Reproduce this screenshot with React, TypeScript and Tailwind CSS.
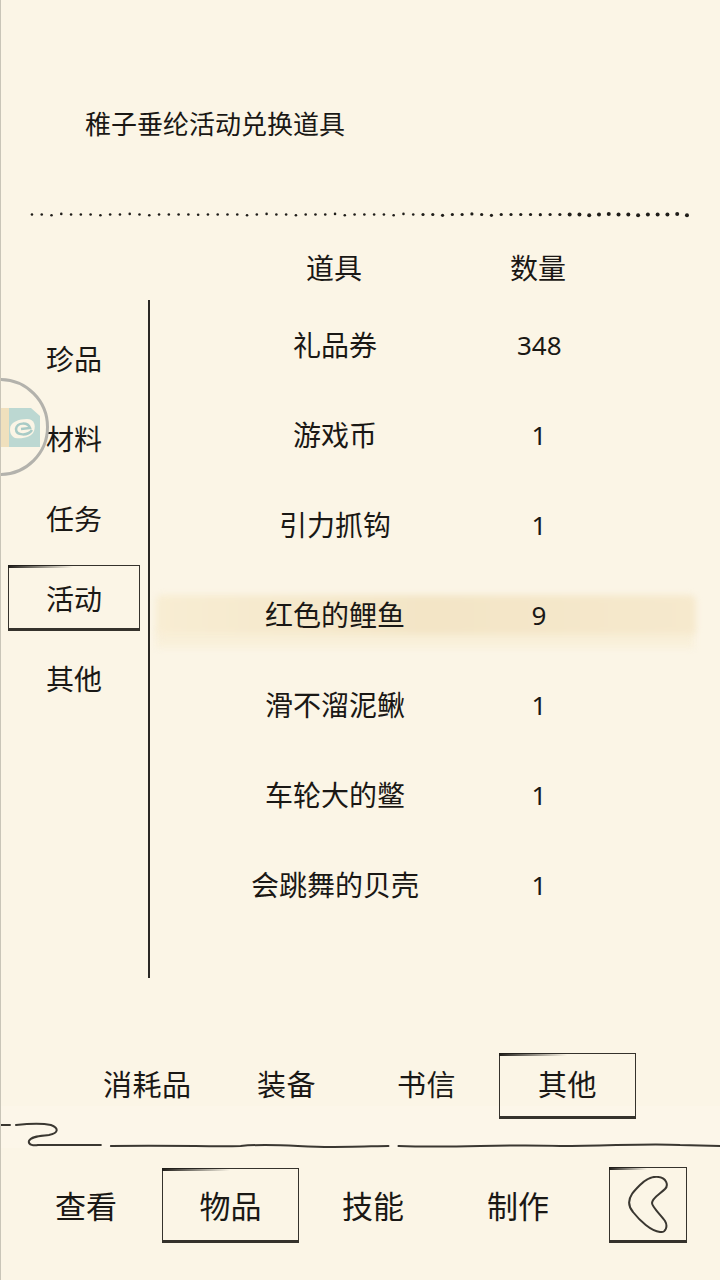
const dots = Array.from({ length: 68 }, (_, i) => ({
  x: 31 + i * 9.79,
  y: 214.5 + (i % 5 === 2 ? 0.8 : 0) - (i % 7 === 3 ? 0.6 : 0),
  r: i < 40 ? 1.3 : i < 55 ? 1.6 : 2,
}));

const items = [
  { name: "礼品券", count: "348" },
  { name: "游戏币", count: "1" },
  { name: "引力抓钩", count: "1" },
  { name: "红色的鲤鱼", count: "9", active: true },
  { name: "滑不溜泥鳅", count: "1" },
  { name: "车轮大的鳖", count: "1" },
  { name: "会跳舞的贝壳", count: "1" },
];

const categories = ["珍品", "材料", "任务", "活动", "其他"];

// hand drawn looking frame around the selected tab
const SketchBox = ({ className, children }: { className: string; children: React.ReactNode }) => (
  <div className={`relative flex items-center justify-center border-[1.5px] border-b-[3px] border-[#35322c] pt-[2px] ${className}`}>
    <span className="absolute -left-px -top-px h-[3px] w-1/2 bg-linear-to-r from-[#1f1d19] to-transparent" />
    {children}
  </div>
);

export default function App() {
  return (
    <div
      className="relative flex h-[1280px] w-[720px] flex-col overflow-hidden border-l border-[#c9c5b8] bg-[#fbf5e6] text-[#1a1815]"
      style={{ fontFamily: '"Noto Sans CJK SC", "Noto Sans", sans-serif' }}
    >
      {/* title */}
      <div className="flex h-[206px] items-start pl-[84px] pt-[104px] text-[26px] leading-[38px]">稚子垂纶活动兑换道具</div>

      {/* dotted rule */}
      <svg className="h-[16px] w-full shrink-0" viewBox="0 206 720 16">
        {dots.map((d, i) => (
          <circle key={i} cx={d.x} cy={d.y} r={d.r} fill="#1f1d19" />
        ))}
      </svg>

      {/* column heads */}
      <div className="flex h-[78px] shrink-0 items-center pl-[150px] pt-[12px] text-[28px]">
        <div className="w-[366px] text-center">道具</div>
        <div className="-ml-[7px] w-[56px] whitespace-nowrap text-center">数量</div>
      </div>

      {/* list area */}
      <div className="flex h-[678px] shrink-0">
        <div className="flex w-[149px] shrink-0 flex-col items-center border-r-2 border-[#2a2824] pr-[1px] pt-[18px]">
          {categories.map((c) => (
            <div key={c} className="flex h-[80px] w-[132px] shrink-0 items-center justify-center text-[28px]">
              {c === "活动" ? <SketchBox className="h-[66px] w-[132px]">{c}</SketchBox> : c}
            </div>
          ))}
        </div>

        <div className="ml-[2px] flex-1">
          {items.map((item) => (
            <div key={item.name} className="relative flex h-[90px] items-center">
              {item.active && (
                <>
                  <div className="absolute left-[4px] right-[26px] top-[60px] h-[18px] bg-[#f9f0da] blur-[3px]" />
                  <div className="absolute left-[4px] right-[24px] top-[25px] h-[40px] rounded-[6px] bg-linear-to-r from-[#f8edd3] via-[#f3e5c6] to-[#f6e9cd] blur-[3px]" />
                </>
              )}
              <div className="relative w-[366px] -translate-y-px text-center text-[28px]">{item.name}</div>
              <div className="relative -ml-[1px] w-[44px] text-center text-[26px]" style={{ fontFamily: '"Noto Sans", sans-serif' }}>
                {item.count}
              </div>
            </div>
          ))}
        </div>
      </div>

      {/* sub tabs */}
      <div className="mt-[74px] flex h-[66px] shrink-0 items-center text-[29px]">
        <div className="ml-[102px] w-[90px] -translate-y-px whitespace-nowrap tracking-[0.5px]">消耗品</div>
        <div className="ml-[64px] w-[60px] -translate-y-px whitespace-nowrap tracking-[0.5px]">装备</div>
        <div className="ml-[80px] w-[60px] -translate-y-px whitespace-nowrap tracking-[0.5px]">书信</div>
        <SketchBox className="ml-[42px] h-[66px] w-[137px] translate-y-px">
          <span className="-translate-y-[2px] tracking-[0.5px]">其他</span>
        </SketchBox>
      </div>

      {/* wave rule */}
      <svg className="-mt-[12px] h-[42px] w-full shrink-0 bg-[#fcf6e9]" viewBox="0 1106 720 42" fill="none" stroke="#3a3731" strokeLinecap="round">
        <path d="M0 1125 H9 M15 1125 C25 1124 40 1123 50 1125 C58 1128 58 1133 48 1135 C40 1136 30 1136 28 1141 C27 1145 33 1146 37 1145 H100" strokeWidth="2" />
        <path d="M110 1146 C180 1145 210 1147 240 1146 C270 1143 300 1147 330 1147 C350 1147 380 1146 388 1146 M398 1146 C460 1148 500 1144 560 1146 C610 1146 650 1143 680 1145 L720 1146" strokeWidth="2" />
      </svg>

      {/* bottom nav */}
      <div className="mt-[19px] flex h-[76px] shrink-0 items-center text-[31px]">
        <div className="ml-[54px] w-[62px] whitespace-nowrap">查看</div>
        <SketchBox className="ml-[45px] h-[75px] w-[137px]">物品</SketchBox>
        <div className="ml-[43px] w-[62px] whitespace-nowrap">技能</div>
        <div className="ml-[83px] w-[62px] whitespace-nowrap">制作</div>
        <SketchBox className="ml-[60px] h-[76px] w-[78px]">
          <svg width="40" height="58" viewBox="0 0 40 58" fill="none" stroke="#3a3731" strokeWidth="2">
            <path d="M12 9 C18 3 25 0 31 1 C38 2 41 9 37 13 C32 18 24 22 24 27 C24 31 33 39 37 45 C40 50 38 57 32 56 C23 55 12 45 5 36 C0 30 0 24 4 18 C6 15 9 12 12 9 Z" />
          </svg>
        </SketchBox>
      </div>

      {/* floating assistant button */}
      <div className="absolute left-[-50px] top-[378px] h-[98px] w-[98px] overflow-hidden rounded-full border-[3px] border-[#b3b2ac] bg-[#fbf5e6]/70">
        <svg className="absolute left-[47px] top-[-3px]" width="50" height="98" viewBox="0 0 50 98">
          <rect x="0" y="30" width="8" height="39" fill="#f0e0bd" />
          <path d="M8 30 H30 L39 38 V69 H8 Z" fill="#bcd8d2" />
          <path d="M9 51 C9 44 18 41 26 41 C33 41 35 47 33 53 C31 59 22 61 14 60 C10 58 9 55 9 51 Z" fill="#fbf5e6" />
          <path d="M31 52 C27 58 15 58 15 51 C16 44 27 44 29 50 L20 51" fill="none" stroke="#a8cbc6" strokeWidth="2.5" />
        </svg>
      </div>
    </div>
  );
}
